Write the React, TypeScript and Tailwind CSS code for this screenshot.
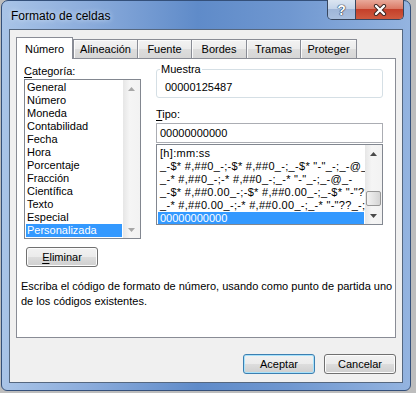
import React from 'react';

const categorias = [
  'General',
  'Número',
  'Moneda',
  'Contabilidad',
  'Fecha',
  'Hora',
  'Porcentaje',
  'Fracción',
  'Científica',
  'Texto',
  'Especial',
  'Personalizada',
];

const formatos = [
  '[h]:mm:ss',
  '_-$* #,##0_-;-$* #,##0_-;_-$* "-"_-;_-@_-',
  '_-* #,##0_-;-* #,##0_-;_-* "-"_-;_-@_-',
  '_-$* #,##0.00_-;-$* #,##0.00_-;_-$* "-"??_-;_-@_-',
  '_-* #,##0.00_-;-* #,##0.00_-;_-* "-"??_-;_-@_-',
  '00000000000',
];

const tabs = [
  { label: 'Alineación', w: 'w-[64px]' },
  { label: 'Fuente', w: 'w-[54px]' },
  { label: 'Bordes', w: 'w-[55px]' },
  { label: 'Tramas', w: 'w-[54px]' },
  { label: 'Proteger', w: 'w-[57px] border-r' },
];

function Arrow({ up, disabled }: { up?: boolean; disabled?: boolean }) {
  return (
    <div className="flex h-[17px] items-center justify-center">
      <svg width="7" height="4" viewBox="0 0 7 4">
        <path
          d={up ? 'M0 4 L3.5 0 L7 4 Z' : 'M0 0 L3.5 4 L7 0 Z'}
          fill={disabled ? '#a7a7a7' : '#4a4a4a'}
        />
      </svg>
    </div>
  );
}

function ScrollBar({ disabled }: { disabled?: boolean }) {
  return (
    <div className="flex w-[17px] flex-col bg-[linear-gradient(90deg,#e6e6e6,#f5f5f5_40%,#f2f2f2)]">
      <Arrow up disabled={disabled} />
      <div className="flex-1">
        {!disabled && (
          <div className="mx-[1px] mt-[29px] h-[15px] rounded-[2px] border border-[#979797] bg-[linear-gradient(90deg,#f2f2f2,#e4e4e4_50%,#d4d4d4)]" />
        )}
      </div>
      <Arrow disabled={disabled} />
    </div>
  );
}

function WinButton({ label, def, underline }: { label: string; def?: boolean; underline?: boolean }) {
  return (
    <button
      type="button"
      className={
        def
          ? 'h-[20px] w-[72px] rounded-[3px] border border-[#3c7fb1] bg-[linear-gradient(#f2f2f2_0%,#ebebeb_50%,#dddddd_50%,#cfcfcf_100%)] text-[11px] leading-[16px] shadow-[inset_0_0_0_1px_#a8e2fb]'
          : 'h-[20px] w-[72px] rounded-[3px] border border-[#707070] bg-[linear-gradient(#f2f2f2_0%,#ebebeb_50%,#dddddd_50%,#cfcfcf_100%)] text-[11px] leading-[16px] shadow-[inset_0_0_0_1px_#fcfcfc]'
      }
    >
      {underline ? (
        <>
          <span className="underline underline-offset-[2px]">{label[0]}</span>
          {label.slice(1)}
        </>
      ) : (
        label
      )}
    </button>
  );
}

export default function App() {
  return (
    <div className="h-[393px] w-[416px] overflow-hidden bg-[#bdbdbd] font-['Liberation_Sans',Arial,sans-serif] text-[11px] leading-[16px] text-black">
      <div className="ml-[1px] flex h-[391px] w-[410px] flex-col rounded-t-[7px] rounded-b-[6px] border border-[#34507a] bg-[linear-gradient(90deg,#a9c4e7_0%,#8aabdb_22%,#5f8bc9_48%,#6f97d0_70%,#94b4e0_100%)] px-[7px] pb-[7px]">
        {/* title bar */}
        <div className="flex h-[28px] items-start">
          <div className="flex h-[28px] flex-1 items-center pl-[2px] pt-[2px] text-[12px] [text-shadow:0_0_5px_#e8f0fa]">
            Formato de celdas
          </div>
          <div className="-mr-[1px] -mt-[1px] flex h-[20px] overflow-hidden rounded-b-[5px] border border-t-0 border-[#37465e]">
            <div className="flex w-[27px] items-center justify-center bg-[linear-gradient(#dbe5f1_0%,#c4d4e9_45%,#9fb6d8_50%,#aac0df_100%)] text-[14px] font-bold text-white [text-shadow:0_0_1px_#1d2b40,0_0_1px_#1d2b40,0_0_1px_#1d2b40]">
              ?
            </div>
            <div className="flex w-[48px] items-center justify-center border-l border-[#37465e] bg-[linear-gradient(#e9a99a_0%,#db7a66_45%,#c4402a_50%,#cf5a3f_100%)]">
              <svg width="14" height="12" viewBox="0 0 14 12">
                <path d="M3 2 L11 10 M11 2 L3 10" stroke="#3a2420" strokeWidth="4.2" strokeLinecap="round" />
                <path d="M3 2 L11 10 M11 2 L3 10" stroke="#ffffff" strokeWidth="2.4" strokeLinecap="round" />
              </svg>
            </div>
          </div>
        </div>

        {/* client area */}
        <div className="flex flex-1 flex-col border border-[#55677f] bg-[#f0f0f0] px-[6px]">
          {/* tabs */}
          <div className="mt-[7px] flex h-[21px] items-end">
            <div className="relative z-10 -mb-[1px] flex h-[22px] w-[57px] items-center justify-center border border-b-0 border-[#898c95] bg-white">
              Número
            </div>
            {tabs.map((t) => (
              <div
                key={t.label}
                className={`flex h-[19px] items-center justify-center border-l border-t border-[#898c95] bg-[linear-gradient(#f3f3f3_0%,#ebebeb_50%,#dddddd_50%,#d6d6d6_100%)] shadow-[inset_1px_1px_0_#fbfbfb] ${t.w}`}
              >
                {t.label}
              </div>
            ))}
          </div>

          {/* tab panel */}
          <div className="flex h-[280px] flex-col border border-[#898c95] bg-white px-[7px] pt-[2px]">
            <div className="flex gap-[15px]">
              {/* category */}
              <div className="flex w-[117px] flex-col pt-[2px]">
                <div>
                  <span className="underline underline-offset-[2px]">C</span>ategoría:
                </div>
                <div className="flex h-[160px] border border-[#828790] bg-white">
                  <div className="flex-1 px-[1px] pt-[1px]">
                    {categorias.map((c) => (
                      <div
                        key={c}
                        className={
                          c === 'Personalizada'
                            ? 'h-[13px] bg-[#3399ff] pl-[1px] leading-[13px] text-white'
                            : 'h-[13px] pl-[1px] leading-[13px]'
                        }
                      >
                        {c}
                      </div>
                    ))}
                  </div>
                  <ScrollBar disabled />
                </div>
              </div>

              {/* right column */}
              <div className="flex w-[227px] flex-col">
                <fieldset className="h-[37px] rounded-[3px] border border-[#d5dfe5] pb-[2px] pl-[3px]">
                  <legend className="px-[1px]">Muestra</legend>
                  <div className="pl-[5px] pt-[2px]">00000125487</div>
                </fieldset>
                <div className="mt-[8px]">
                  <span className="underline underline-offset-[2px]">T</span>ipo:
                </div>
                <div className="mt-[1px] flex h-[20px] items-center border border-[#abadb3] pl-[3px]">00000000000</div>
                <div className="mt-[1px] flex h-[81px] border border-[#828790]">
                  <div className="min-w-0 flex-1 overflow-hidden px-[1px] pt-[2px]">
                    {formatos.map((f, i) => (
                      <div
                        key={f}
                        className={
                          i === formatos.length - 1
                            ? 'h-[13px] whitespace-nowrap bg-[#3399ff] pl-[2px] leading-[13px] text-white'
                            : 'h-[13px] whitespace-nowrap pl-[2px] leading-[13px] tracking-[0.3px]'
                        }
                      >
                        {f}
                      </div>
                    ))}
                  </div>
                  <ScrollBar />
                </div>
              </div>
            </div>

            <div className="ml-[2px] mt-[8px]">
              <WinButton label="Eliminar" underline />
            </div>

            <p className="-ml-[3px] mt-[12px] whitespace-nowrap leading-[15px]">
              Escriba el código de formato de número, usando como punto de partida uno
              <br />
              de los códigos existentes.
            </p>
          </div>

          {/* dialog buttons */}
          <div className="mt-[16px] flex justify-end gap-[9px]">
            <WinButton label="Aceptar" def />
            <WinButton label="Cancelar" />
          </div>
        </div>
      </div>
    </div>
  );
}
